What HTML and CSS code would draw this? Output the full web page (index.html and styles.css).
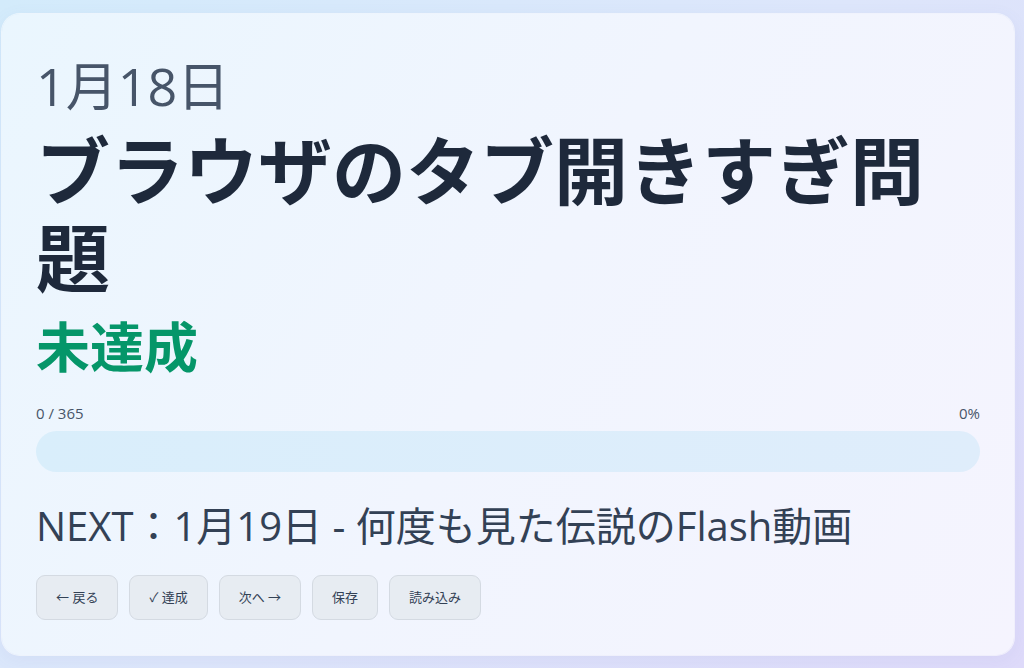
FILE: index.html
```html
<!DOCTYPE html>
<html lang="ja">
<head>
<meta charset="utf-8">
<title>1月18日 - ブラウザのタブ開きすぎ問題</title>
<link rel="stylesheet" href="styles.css">
</head>
<body>
<main class="shell">
  <section class="card">
    <div class="date">1月18日</div>
    <h1 class="title">ブラウザのタブ開きすぎ問題</h1>
    <div class="status">未達成</div>
    <div class="progress">
      <div class="progress-meta">
        <span>0 / 365</span>
        <span>0%</span>
      </div>
      <div class="track"><div class="fill" style="width:0%"></div></div>
    </div>
    <p class="next">NEXT：1月19日 - 何度も見た伝説のFlash動画</p>
    <div class="actions">
      <button class="btn">← 戻る</button>
      <button class="btn">✓ 達成</button>
      <button class="btn">次へ →</button>
      <button class="btn">保存</button>
      <button class="btn">読み込み</button>
    </div>
  </section>
</main>
</body>
</html>
```

FILE: styles.css
```css
* { box-sizing: border-box; }

html, body {
  margin: 0;
  height: 100%;
}

body {
  font-family: "Open Sans", "Noto Sans CJK JP", sans-serif;
  background: linear-gradient(135deg, #d3ebfb 0%, #dde6fb 50%, #dedafa 100%);
  color: #1e293b;
  overflow: hidden;
}

.shell {
  padding: 14px 10px 13px 2px;
  height: 100%;
}

.card {
  height: 100%;
  border-radius: 18px;
  background: linear-gradient(120deg, #eaf6fe 0%, #f1f5fe 50%, #f5f4fe 100%);
  box-shadow: 0 0 0 1px rgba(255, 255, 255, 0.6), 0 4px 18px rgba(100, 120, 180, 0.08);
  padding: 41px 34px 34px 34px;
  display: flex;
  flex-direction: column;
}

.date {
  font-size: 52px;
  line-height: 1.2;
  color: #475569;
}

.title {
  margin: 6px 0 0;
  font-family: "Noto Sans CJK JP", sans-serif;
  font-size: 74px;
  line-height: 87px;
  font-weight: 700;
  color: #1e293b;
}

.status {
  margin-top: 16px;
  font-family: "Noto Sans CJK JP", sans-serif;
  font-size: 54px;
  line-height: 1.2;
  font-weight: 700;
  color: #059669;
}

.progress {
  margin-top: 26px;
}

.progress-meta {
  display: flex;
  justify-content: space-between;
  font-size: 15px;
  line-height: 18px;
  color: #475569;
}

.track {
  margin-top: 9px;
  height: 41px;
  border-radius: 999px;
  background: linear-gradient(90deg, #d9eefb, #dfedfb);
  overflow: hidden;
}

.fill {
  height: 100%;
  background: #059669;
}

.next {
  margin: 30px 0 0;
  font-size: 40px;
  line-height: 48px;
  color: #334155;
}

.actions {
  margin-top: 25px;
  display: flex;
  gap: 11px;
}

.btn {
  font-family: inherit;
  font-size: 13px;
  line-height: 19px;
  color: #334155;
  background: #e7ecf2;
  border: 1px solid #d4dae2;
  border-radius: 9px;
  padding: 12px 19px;
  cursor: pointer;
}
```
